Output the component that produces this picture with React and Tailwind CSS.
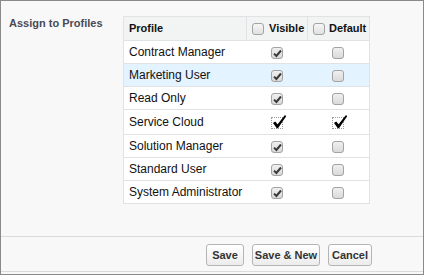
import React from 'react';

const profiles = [
  { name: 'Contract Manager', visible: true },
  { name: 'Marketing User', visible: true, highlight: true },
  { name: 'Read Only', visible: true },
  { name: 'Service Cloud', custom: true },
  { name: 'Solution Manager', visible: true },
  { name: 'Standard User', visible: true },
  { name: 'System Administrator', visible: true },
];

function Box({ checked, light }) {
  return (
    <span
      className={`relative inline-block w-[12px] h-[12px] rounded-[3px] border border-[#a3a3a3] ${
        light ? 'bg-gradient-to-b from-[#f7f7f7] to-[#e0e0e0]' : 'bg-gradient-to-b from-[#f0f0f0] to-[#d9d9d9]'
      }`}
    >
      {checked && (
        <svg className="absolute left-[1px] top-[1px]" width="9" height="9" viewBox="0 0 9 9">
          <path d="M1 4.6 L3.4 7 L8 1.5" fill="none" stroke="#3a3a3a" strokeWidth="2" />
        </svg>
      )}
    </span>
  );
}

function BigCheck() {
  return (
    <span className="relative inline-block w-[12px] h-[12px] border border-dotted border-[#9a9a9a]">
      <svg className="absolute left-[0px] top-[-4px] overflow-visible" width="15" height="15" viewBox="0 0 15 15">
        <path d="M1 9 L3.2 7.4 L5.6 10.2 L13 1 L14.2 2.2 L6 14.2 L4.8 14.2 Z" fill="#000" />
      </svg>
    </span>
  );
}

const btn =
  'h-[22px] rounded-[3px] border border-[#b5b5b5] bg-gradient-to-b from-white to-[#ececec] flex items-center justify-center';

export default function App() {
  return (
    <div className="w-[424px] h-[275px] border border-[#8a8a8a] bg-[#f8f8f8] flex flex-col font-['Liberation_Sans',Arial,sans-serif]">
      <div className="flex-1 flex pt-[15px]">
        <div className="w-[122px] pl-[8px] text-[11px] font-bold text-[#4a4a56] leading-[13px] pt-[1px]">
          Assign to Profiles
        </div>
        <div>
          <table className="border-collapse border border-[#e0e3e5] bg-white text-[12px] text-[#111]">
            <thead>
              <tr className="h-[24px] bg-[#f2f3f3] text-[11px] font-bold">
                <th className="w-[123px] border border-[#e0e3e5] text-left pl-[5px] pr-0 font-bold">Profile</th>
                <th className="w-[61px] border border-[#e0e3e5] pl-[5px] font-bold">
                  <div className="flex items-center gap-[5px]">
                    <Box light />
                    <span>Visible</span>
                  </div>
                </th>
                <th className="w-[62px] border border-[#e0e3e5] pl-[5px] font-bold">
                  <div className="flex items-center gap-[4px]">
                    <Box light />
                    <span>Default</span>
                  </div>
                </th>
              </tr>
            </thead>
            <tbody>
              {profiles.map((p) => (
                <tr
                  key={p.name}
                  className={`${p.custom ? 'h-[25px]' : 'h-[23px]'} border-t border-[#e0e3e5] ${
                    p.highlight ? 'bg-[#e3f3ff]' : 'bg-white'
                  }`}
                >
                  <td className="pl-[5px] pr-0 py-0 leading-[14px]">{p.name}</td>
                  <td className="text-center">
                    <div className="flex justify-center pr-[1px] pt-[1px]">
                      {p.custom ? <BigCheck /> : <Box checked={p.visible} />}
                    </div>
                  </td>
                  <td className="text-center">
                    <div className="flex justify-center pr-[1px] pt-[1px]">
                      {p.custom ? <BigCheck /> : <Box />}
                    </div>
                  </td>
                </tr>
              ))}
            </tbody>
          </table>
        </div>
      </div>
      <div className="h-[36px] border-t border-b border-[#dbdbdb] flex items-start pt-[7px] pl-[205px] gap-[8px] text-[11px] font-bold text-[#333]">
        <button className={`${btn} w-[38px]`}>Save</button>
        <button className={`${btn} w-[68px]`}>Save &amp; New</button>
        <button className={`${btn} w-[44px]`}>Cancel</button>
      </div>
      <div className="h-[2px]" />
    </div>
  );
}
